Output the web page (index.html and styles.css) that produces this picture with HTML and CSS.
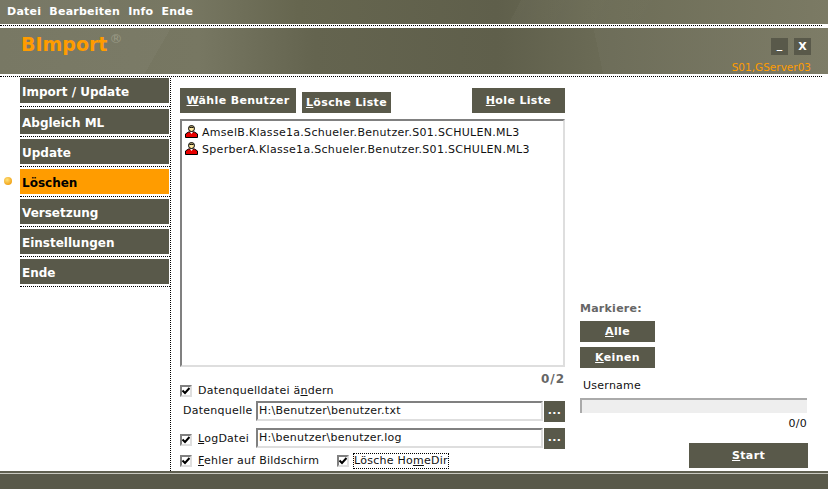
FILE: index.html
```html
<!doctype html>
<html lang="de">
<head>
    <meta charset="UTF-8">
    <title>BImport</title>
    <link rel="stylesheet" href="styles.css">
</head>
<body>
    <svg class="defs" width="0" height="0">
        <symbol id="tick" viewBox="0 0 8 8">
            <path d="M0.5 3.5 L3 6 L7.5 1" fill="none" stroke="#000" stroke-width="2"/>
        </symbol>
        <symbol id="user" viewBox="0 0 13 13">
            <path d="M0.5 12.5 V9 L3.5 7 H9.5 L12.5 9 V12.5 Z" fill="#e80000" stroke="#000" stroke-width="1"/>
            <circle cx="6.5" cy="3.5" r="3" fill="#ffe9a0" stroke="#000" stroke-width="1"/>
            <path d="M3.5 3.5 Q6.5 -0.5 9.5 3.5 Q6.5 1.8 3.5 3.5 Z" fill="#000"/>
            <path d="M5 7 L6.5 9 L8 7 Z" fill="#fff"/>
        </symbol>
    </svg>

    <div class="menubar">
        <a class="menu-item">Datei</a>
        <a class="menu-item">Bearbeiten</a>
        <a class="menu-item">Info</a>
        <a class="menu-item">Ende</a>
    </div>
    <div class="rule rule-top"></div>
    <div class="header">
        <div class="logo">BImport<sup class="logo-reg">®</sup></div>
        <div class="win">
            <div class="win-btns">
                <div class="win-btn win-min">_</div>
                <div class="win-btn">X</div>
            </div>
            <div class="server">S01,GServer03</div>
        </div>
    </div>
    <div class="rule rule-bottom"></div>

    <div class="main">
        <div class="side">
            <div class="side-item side-first">Import / Update</div>
            <div class="side-item">Abgleich ML</div>
            <div class="side-item">Update</div>
            <div class="side-item current">Löschen</div>
            <div class="side-item">Versetzung</div>
            <div class="side-item">Einstellungen</div>
            <div class="side-item">Ende</div>
        </div>

        <div class="content">
            <div class="toolbar">
                <div class="btn btn-pick"><u>W</u>ähle Benutzer</div>
                <div class="btn btn-clear"><u>L</u>ösche Liste</div>
                <div class="btn btn-fetch"><u>H</u>ole Liste</div>
            </div>
            <div class="list">
                <div class="list-row"><svg class="list-icon"><use href="#user"/></svg>AmselB.Klasse1a.Schueler.Benutzer.S01.SCHULEN.ML3</div>
                <div class="list-row"><svg class="list-icon"><use href="#user"/></svg>SperberA.Klasse1a.Schueler.Benutzer.S01.SCHULEN.ML3</div>
            </div>
            <div class="count">0/2</div>
            <div class="check-row">
                <span class="check"><svg class="tick"><use href="#tick"/></svg></span>
                <span>Datenquelldatei ä<u>n</u>dern</span>
            </div>
            <div class="file-row file-source">
                <span class="file-label">Datenquelle</span>
                <div class="field">H:\Benutzer\benutzer.txt</div>
                <div class="btn btn-dots">...</div>
            </div>
            <div class="file-row file-log">
                <span class="file-label log-label">
                    <span class="check"><svg class="tick"><use href="#tick"/></svg></span>
                    <span class="log-text"><u>L</u>ogDatei</span>
                </span>
                <div class="field">H:\benutzer\benutzer.log</div>
                <div class="btn btn-dots">...</div>
            </div>
            <div class="check-row check-last">
                <span class="check"><svg class="tick"><use href="#tick"/></svg></span>
                <span class="check-err"><u>F</u>ehler auf Bildschirm</span>
                <span class="check"><svg class="tick"><use href="#tick"/></svg></span>
                <span class="focus">Lösche Ho<u>m</u>eDir</span>
            </div>
        </div>

        <div class="right">
            <div class="mark-title">Markiere:</div>
            <div class="btn btn-mark"><u>A</u>lle</div>
            <div class="btn btn-mark"><u>K</u>einen</div>
            <div class="user-label">Username</div>
            <div class="progress"></div>
            <div class="progress-count">0/0</div>
            <div class="btn btn-start"><u>S</u>tart</div>
        </div>
    </div>

    <div class="footer"></div>
</body>
</html>
```

FILE: styles.css
```css
*{
    padding: 0;
    margin: 0;
    box-sizing: border-box;
}
body{
    width: 828px;
    height: 489px;
    overflow: hidden;
    background: #fff;
    color: #111;
    font: 11px/14px "DejaVu Sans", Verdana, sans-serif;
    letter-spacing: .25px;
}
.defs{
    position: absolute;
}
u{
    text-underline-offset: 1px;
}

/* top */
.menubar{
    height: 24px;
    padding: 0 0 0 7px;
    display: flex;
    align-items: center;
    gap: 8px;
    color: #fff;
    font-weight: bold;
    background:
        linear-gradient(118deg, rgba(255,255,255,0) 62%, rgba(255,255,255,.025) 62%, rgba(255,255,255,0) 80%),
        linear-gradient(70deg, rgba(255,255,255,.03) 0, rgba(255,255,255,.03) 14%, rgba(255,255,255,0) 14%),
        linear-gradient(90deg, #737360 0, #787863 22%, #66664f 36%, #5f5f4b 60%, #6d6d57 72%, #7b7a64 100%);
}
.rule{
    border-top: 1px dotted #000;
    margin-right: 6px;
}
.rule-top{
    margin-top: 1px;
    height: 3px;
}
.header{
    height: 46px;
    padding: 0 17px 0 21px;
    display: flex;
    justify-content: space-between;
    background:
        linear-gradient(120deg, rgba(255,255,255,.03) 0, rgba(255,255,255,.03) 20%, rgba(255,255,255,0) 20%),
        linear-gradient(78deg, rgba(0,0,0,0) 72%, rgba(255,255,255,.025) 72%),
        linear-gradient(90deg, #74745f 0, #777762 24%, #64644f 38%, #5f5f4b 60%, #6a6a55 72%, #7a7963 100%);
}
.logo{
    padding-top: 4px;
    color: #ff9c00;
    font-size: 19px;
    line-height: 24px;
    font-weight: bold;
    letter-spacing: 0;
}
.logo-reg{
    color: #9a9a86;
    font-size: 13px;
    font-weight: normal;
    line-height: 0;
    vertical-align: 8px;
    margin-left: 2px;
}
.win{
    display: flex;
    flex-direction: column;
    align-items: flex-end;
    padding-top: 10px;
}
.win-btns{
    display: flex;
    gap: 6px;
}
.win-btn{
    width: 17px;
    height: 17px;
    background: #59594a;
    color: #fff;
    font-weight: bold;
    text-align: center;
    line-height: 17px;
}
.win-min{
    line-height: 14px;
}
.server{
    margin-top: 5px;
    color: #ff9c00;
    font-size: 10.5px;
    line-height: 14px;
    letter-spacing: 0;
}
.rule-bottom{
    margin-top: 2px;
    height: 2px;
}

/* main */
.main{
    height: 393px;
    display: flex;
}
.side{
    width: 171px;
    height: 393px;
    padding: 0 0 0 20px;
    border-right: 1px dotted #000;
    display: flex;
    flex-direction: column;
}
.side-item{
    position: relative;
    height: 30px;
    padding: 7px 0 0 2px;
    color: #fff;
    font-size: 12px;
    line-height: 15px;
    font-weight: bold;
    letter-spacing: 0;
    background: linear-gradient(#59594a, #59594a) no-repeat 0 0 / 149px 25px;
}
.side-item::after{
    content: "";
    position: absolute;
    left: 0;
    right: 0;
    top: 27px;
    border-top: 1px dotted #000;
}
.side-first{
    height: 31px;
}
.side-first::after{
    top: 28px;
}
.side-item.current{
    color: #000;
    background-image: linear-gradient(#ff9c00, #ff9c00);
}
.side-item.current::before{
    content: "";
    position: absolute;
    left: -16px;
    top: 8px;
    width: 8px;
    height: 8px;
    border-radius: 50%;
    background: radial-gradient(circle at 40% 35%, #ffe27a, #f2a51c 70%);
}

.content{
    width: 394px;
    padding: 10px 0 0 9px;
}
.btn{
    background: #59594a;
    color: #fff;
    font-weight: bold;
    text-align: center;
    letter-spacing: .35px;
}
.toolbar{
    height: 25px;
    display: flex;
    align-items: flex-end;
}
.btn-pick{
    width: 116px;
    height: 25px;
    line-height: 25px;
}
.btn-clear{
    width: 89px;
    height: 21px;
    margin-left: 6px;
    line-height: 22px;
}
.btn-fetch{
    width: 93px;
    height: 25px;
    margin-left: auto;
    line-height: 25px;
}
.list{
    height: 248px;
    margin-top: 6px;
    padding: 4px 0 0 3px;
    border: 2px solid #dedede;
    border-top-color: #808080;
    border-left-color: #808080;
    background: #fff;
}
.list-row{
    height: 17px;
    display: flex;
    align-items: flex-start;
    gap: 4px;
    line-height: 15px;
    letter-spacing: .3px;
    white-space: nowrap;
}
.list-icon{
    width: 13px;
    height: 13px;
    flex: none;
}
.count{
    margin-top: 6px;
    height: 12px;
    line-height: 12px;
    text-align: right;
    color: #666;
    font-size: 12px;
    font-weight: bold;
    letter-spacing: 1px;
}
.check-row{
    height: 12px;
    display: flex;
    align-items: center;
    gap: 6px;
    white-space: nowrap;
}
.check{
    width: 12px;
    height: 12px;
    flex: none;
    display: inline-block;
    border: 2px solid #dedede;
    border-top-color: #808080;
    border-left-color: #808080;
    background: #fff;
}
.tick{
    display: block;
    width: 8px;
    height: 8px;
}
.file-row{
    display: flex;
    align-items: flex-start;
    height: 21px;
}
.file-source{
    margin-top: 4px;
}
.file-log{
    margin-top: 6px;
}
.file-label{
    width: 76px;
    flex: none;
    padding: 3px 0 0 3px;
    white-space: nowrap;
}
.log-label{
    padding: 6px 0 0 0;
    display: flex;
    align-items: flex-start;
    gap: 6px;
}
.log-text{
    margin-top: -2px;
}
.field{
    width: 287px;
    height: 20px;
    padding-left: 1px;
    border: 2px solid #dedede;
    border-top-color: #808080;
    border-left-color: #808080;
    line-height: 15px;
    white-space: nowrap;
}
.btn-dots{
    width: 21px;
    height: 21px;
    margin-left: 1px;
    line-height: 19px;
}
.check-last{
    margin-top: 6px;
}
.check-err{
    width: 133px;
}
.focus{
    margin-left: -2px;
    padding: 0;
    height: 16px;
    line-height: 14px;
    border: 1px dotted #000;
}

/* right */
.right{
    width: 228px;
    margin-left: 15px;
    padding-bottom: 3px;
    display: flex;
    flex-direction: column;
    justify-content: flex-end;
}
.mark-title{
    height: 14px;
    color: #666;
    font-weight: bold;
}
.btn-mark{
    width: 75px;
    height: 21px;
    margin-top: 5px;
    line-height: 21px;
}
.user-label{
    margin-top: 11px;
    padding-left: 3px;
    height: 14px;
}
.progress{
    width: 227px;
    height: 15px;
    margin-top: 5px;
    background: #eee;
    border-top: 2px solid #aaa;
    border-left: 2px solid #aaa;
}
.progress-count{
    width: 227px;
    margin-top: 4px;
    height: 14px;
    text-align: right;
}
.btn-start{
    width: 119px;
    height: 25px;
    margin-top: 12px;
    margin-left: auto;
    line-height: 25px;
}

.footer{
    height: 19px;
    background: #59594a;
    border-top: 2px solid #5f5f50;
    box-shadow: inset 0 1px 0 #c9c9c0;
}
```
